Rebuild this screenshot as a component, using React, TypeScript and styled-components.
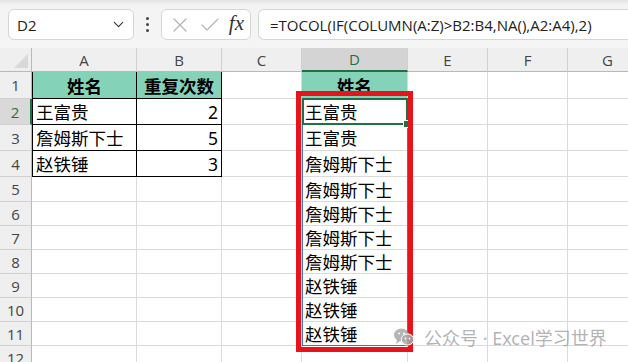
import styled, { createGlobalStyle } from "styled-components";
import { ChevronDown, X, Check } from "lucide-react";

const GlobalStyle = createGlobalStyle`
  body {
    margin: 0;
    background: #ffffff;
    font-family: "Noto Sans", "Noto Sans CJK SC", sans-serif;
  }
`;

// row-header column, then A..G
const COLS = [32, 105, 85, 80, 106, 80, 80, 80];
// column-header row, then rows 1..12
const ROWS = [24, 27, 26, 26, 26, 25, 24, 24, 24, 24, 24, 24, 24];
const LETTERS = ["A", "B", "C", "D", "E", "F", "G"];

const colX = (i: number) => COLS.slice(0, i).reduce((a, b) => a + b, 0);
const rowY = (i: number) => ROWS.slice(0, i).reduce((a, b) => a + b, 0);

const Page = styled.div`
  width: 628px;
  height: 362px;
  overflow: hidden;
  background: #fff;
`;

const Toolbar = styled.div`
  height: 48px;
  box-sizing: border-box;
  padding: 9px 0 0 8px;
  display: flex;
  align-items: flex-start;
  background: linear-gradient(#e4e4e4 0px, #f3f3f3 5px, #f5f5f5 100%);
`;

const NameBox = styled.div`
  width: 126px;
  height: 31px;
  box-sizing: border-box;
  border: 1px solid #d6d6d6;
  border-radius: 6px;
  background: #fff;
  display: flex;
  align-items: center;
  justify-content: space-between;
  padding: 0 6px 0 8px;
  font-family: "Open Sans", "Noto Sans", sans-serif;
  font-size: 15px;
  color: #222;
`;

const Dots = styled.div`
  width: 27px;
  height: 31px;
  display: flex;
  flex-direction: column;
  align-items: center;
  justify-content: center;
  gap: 3px;
  span {
    width: 3px;
    height: 3px;
    border-radius: 50%;
    background: #444;
  }
`;

const FxBox = styled.div`
  width: 90px;
  height: 31px;
  box-sizing: border-box;
  border: 1px solid #d6d6d6;
  border-radius: 6px;
  background: #fff;
  display: flex;
  align-items: center;
  justify-content: space-between;
  padding: 0 6px;
  color: #b5b5b5;
`;

const FxLabel = styled.span`
  font-family: "Liberation Serif", serif;
  font-style: italic;
  font-size: 21px;
  color: #333;
  line-height: 1;
  margin-top: -3px;
`;

const FormulaBox = styled.div`
  flex: 1;
  margin-left: 7px;
  height: 31px;
  box-sizing: border-box;
  border: 1px solid #d6d6d6;
  border-right: none;
  border-radius: 6px 0 0 6px;
  background: #fff;
  display: flex;
  align-items: center;
  padding-left: 11px;
  font-family: "Open Sans", "Noto Sans", sans-serif;
  font-size: 15px;
  color: #222;
  white-space: nowrap;
  overflow: hidden;
`;

const Sheet = styled.div`
  position: relative;
  display: grid;
  grid-template-columns: ${COLS.map((c) => c + "px").join(" ")};
  grid-template-rows: ${ROWS.map((r) => r + "px").join(" ")};
`;

const Corner = styled.div`
  background: #efefef;
  border-right: 1px solid #b9b9b9;
  border-bottom: 1px solid #b9b9b9;
  box-sizing: border-box;
  position: relative;
  &::after {
    content: "";
    position: absolute;
    right: 3px;
    bottom: 3px;
    border-style: solid;
    border-width: 0 0 14px 14px;
    border-color: transparent transparent #d8d8d8 transparent;
  }
`;

const ColHead = styled.div<{ $active?: boolean }>`
  box-sizing: border-box;
  background: ${(p) => (p.$active ? "#d4d4d4" : "#efefef")};
  border-right: 1px solid #d0d0d0;
  border-bottom: ${(p) => (p.$active ? "2px solid #1f7145" : "1px solid #b9b9b9")};
  display: flex;
  align-items: center;
  justify-content: center;
  font-family: "Open Sans", "Noto Sans", sans-serif;
  font-size: 15px;
  color: ${(p) => (p.$active ? "#1f7145" : "#444")};
`;

const RowHead = styled.div<{ $active?: boolean }>`
  box-sizing: border-box;
  background: ${(p) => (p.$active ? "#d9d9d9" : "#efefef")};
  border-right: ${(p) => (p.$active ? "2px solid #1f7145" : "1px solid #b9b9b9")};
  border-bottom: 1px solid #d0d0d0;
  display: flex;
  align-items: center;
  justify-content: center;
  font-family: "Open Sans", "Noto Sans", sans-serif;
  font-size: 15px;
  color: ${(p) => (p.$active ? "#1f7145" : "#444")};
`;

const Cell = styled.div<{
  $fill?: string;
  $boxed?: boolean;
  $first?: boolean;
  $right?: boolean;
  $bold?: boolean;
  $center?: boolean;
}>`
  box-sizing: border-box;
  background: ${(p) => p.$fill || "#fff"};
  border-right: 1px solid ${(p) => (p.$boxed ? "#000" : "#dadada")};
  border-bottom: 1px solid ${(p) => (p.$boxed ? "#000" : "#dadada")};
  border-left: ${(p) => (p.$first ? "1px solid #000" : "none")};
  display: flex;
  align-items: center;
  justify-content: ${(p) => (p.$center ? "center" : p.$right ? "flex-end" : "flex-start")};
  padding: 0 3px;
  font-family: "Noto Sans", "Noto Sans CJK SC", sans-serif;
  font-size: 17.5px;
  font-weight: ${(p) => (p.$bold ? 700 : 400)};
  color: #000;
  white-space: nowrap;
  overflow: hidden;
`;

const Selection = styled.div`
  position: absolute;
  box-sizing: border-box;
  border: 2px solid #1f7145;
  &::after {
    content: "";
    position: absolute;
    right: -5px;
    bottom: -5px;
    width: 6px;
    height: 6px;
    background: #1f7145;
    border: 1px solid #fff;
  }
`;

const SpillRange = styled.div`
  position: absolute;
  box-sizing: border-box;
  border: 1px solid #4a72c2;
`;

const Highlight = styled.div`
  position: absolute;
  box-sizing: border-box;
  border: 5px solid #e8141c;
`;

const Watermark = styled.div`
  position: absolute;
  left: 394px;
  top: 276px;
  display: flex;
  align-items: center;
  gap: 10px;
  font-family: "Noto Sans", "Noto Sans CJK SC", sans-serif;
  font-size: 18px;
  color: rgba(150, 150, 150, 0.72);
  white-space: nowrap;
`;

type CellSpec = {
  text?: string;
  fill?: string;
  boxed?: boolean;
  first?: boolean;
  right?: boolean;
  bold?: boolean;
  center?: boolean;
};

const TEAL = "#84d3b9";
const spill = ["王富贵", "王富贵", "詹姆斯下士", "詹姆斯下士", "詹姆斯下士", "詹姆斯下士", "詹姆斯下士", "赵铁锤", "赵铁锤", "赵铁锤"];
const source = [
  ["王富贵", "2"],
  ["詹姆斯下士", "5"],
  ["赵铁锤", "3"],
];

function buildRow(r: number): CellSpec[] {
  const cells: CellSpec[] = Array.from({ length: LETTERS.length }, () => ({}));
  if (r === 1) {
    cells[0] = { text: "姓名", fill: TEAL, boxed: true, first: true, bold: true, center: true };
    cells[1] = { text: "重复次数", fill: TEAL, boxed: true, bold: true, center: true };
    cells[3] = { text: "姓名", fill: TEAL, bold: true, center: true };
  } else {
    if (r <= 4) {
      const [name, n] = source[r - 2];
      cells[0] = { text: name, boxed: true, first: true };
      cells[1] = { text: n, boxed: true, right: true };
    }
    if (r <= 11) cells[3] = { text: spill[r - 2] };
  }
  return cells;
}

function WeChat() {
  return (
    <svg width="20" height="18" viewBox="0 0 20 18">
      <ellipse cx="7.5" cy="7" rx="7.5" ry="6.5" fill="rgba(150,150,150,0.7)" />
      <path d="M3 12 L2 16 L6 13 Z" fill="rgba(150,150,150,0.7)" />
      <ellipse cx="13.5" cy="11.5" rx="6.3" ry="5.5" fill="rgba(170,170,170,0.85)" stroke="#fff" strokeWidth="1" />
      <circle cx="5" cy="5.5" r="1" fill="#fff" />
      <circle cx="10" cy="5.5" r="1" fill="#fff" />
      <circle cx="11.5" cy="10.5" r="0.9" fill="#fff" />
      <circle cx="15.5" cy="10.5" r="0.9" fill="#fff" />
    </svg>
  );
}

export default function App() {
  const spillTop = rowY(2);
  const spillHeight = rowY(12) - rowY(2);
  return (
    <Page>
      <GlobalStyle />
      <Toolbar>
        <NameBox>
          <span>D2</span>
          <ChevronDown size={17} strokeWidth={1.6} color="#333" />
        </NameBox>
        <Dots>
          <span />
          <span />
          <span />
        </Dots>
        <FxBox>
          <X size={24} strokeWidth={1.2} />
          <Check size={24} strokeWidth={1.2} />
          <FxLabel>fx</FxLabel>
        </FxBox>
        <FormulaBox>=TOCOL(IF(COLUMN(A:Z)&gt;B2:B4,NA(),A2:A4),2)</FormulaBox>
      </Toolbar>
      <Sheet>
        <Corner />
        {LETTERS.map((l) => (
          <ColHead key={l} $active={l === "D"}>
            {l}
          </ColHead>
        ))}
        {ROWS.slice(1).map((_, i) => {
          const r = i + 1;
          return [
            <RowHead key={"h" + r} $active={r === 2}>
              {r}
            </RowHead>,
            ...buildRow(r).map((c, j) => (
              <Cell
                key={r + "-" + j}
                $fill={c.fill}
                $boxed={c.boxed}
                $first={c.first}
                $right={c.right}
                $bold={c.bold}
                $center={c.center}
              >
                {c.text}
              </Cell>
            )),
          ];
        })}
        <SpillRange style={{ left: colX(4), top: spillTop - 1, width: COLS[4], height: spillHeight + 1 }} />
        <Selection style={{ left: colX(4), top: spillTop - 1, width: COLS[4], height: ROWS[2] + 1 }} />
        <Highlight style={{ left: colX(4) - 6, top: spillTop - 8, width: COLS[4] + 11, height: spillHeight + 14 }} />
        <Watermark>
          <WeChat />
          <span>公众号 · Excel学习世界</span>
        </Watermark>
      </Sheet>
    </Page>
  );
}
